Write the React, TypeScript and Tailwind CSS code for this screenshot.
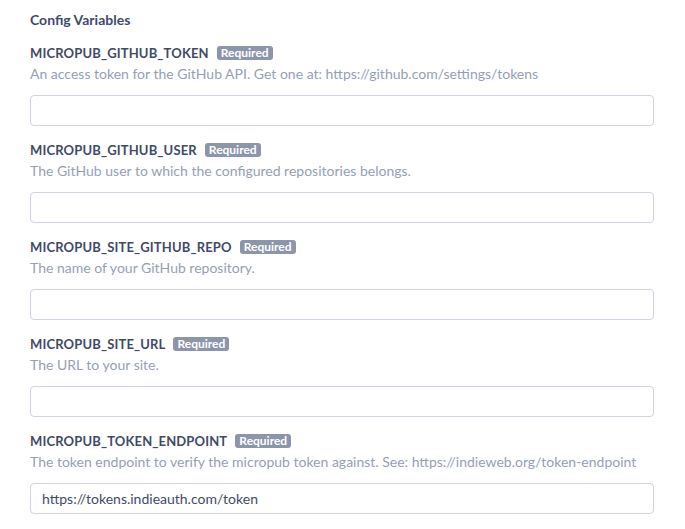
import React from "react";

const vars = [
  {
    name: "MICROPUB_GITHUB_TOKEN",
    desc: "An access token for the GitHub API. Get one at: https://github.com/settings/tokens",
    value: "",
  },
  {
    name: "MICROPUB_GITHUB_USER",
    desc: "The GitHub user to which the configured repositories belongs.",
    value: "",
  },
  {
    name: "MICROPUB_SITE_GITHUB_REPO",
    desc: "The name of your GitHub repository.",
    value: "",
  },
  {
    name: "MICROPUB_SITE_URL",
    desc: "The URL to your site.",
    value: "",
  },
  {
    name: "MICROPUB_TOKEN_ENDPOINT",
    desc: "The token endpoint to verify the micropub token against. See: https://indieweb.org/token-endpoint",
    value: "https://tokens.indieauth.com/token",
  },
];

export default function App() {
  return (
    <div
      className="w-[685px] h-[529px] bg-white pl-[30px] pr-[31px] pt-[12px] overflow-hidden"
      style={{ fontFamily: "Lato, 'Open Sans', sans-serif" }}
    >
      <div className="text-[14px] leading-[16px] font-bold text-[#3f4a6b]">Config Variables</div>
      <div className="flex flex-col gap-[16px] mt-[17px]">
        {vars.map((v) => (
          <div key={v.name} className="flex flex-col">
            <div className="flex items-center gap-[8px] h-[16px]">
              <span className="text-[13px] leading-[16px] font-bold tracking-[0.15px] text-[#3f4a6b]">{v.name}</span>
              <span className="bg-[#8c95aa] text-white text-[12px] leading-[14px] font-bold px-[4px] rounded-[3px]">
                Required
              </span>
            </div>
            <div className="text-[14px] leading-[16px] text-[#96a0b5] mt-[5px]">{v.desc}</div>
            <input
              readOnly
              value={v.value}
              className="mt-[13px] h-[31px] w-full border border-[#cfd3e6] rounded-[4px] px-[11px] text-[14px] text-[#3f4a6b] outline-none"
              style={{ fontFamily: "Lato, 'Open Sans', sans-serif" }}
            />
          </div>
        ))}
      </div>
    </div>
  );
}
